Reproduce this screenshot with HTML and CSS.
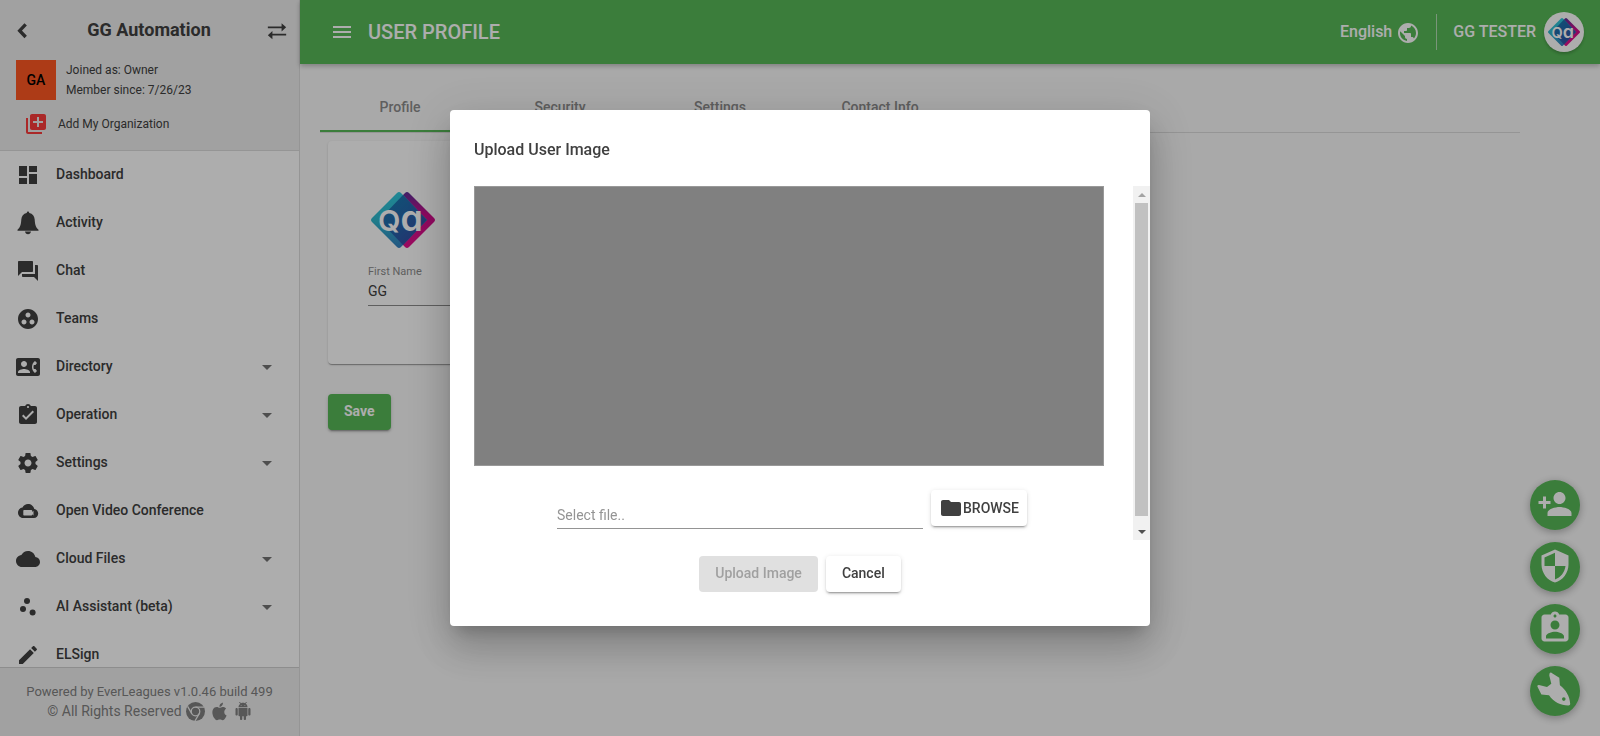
FILE: index.html
```html
<!DOCTYPE html>
<html lang="en">
<head>
<meta charset="utf-8">
<meta name="viewport" content="width=device-width, initial-scale=1">
<title>User Profile</title>
<link rel="stylesheet" href="styles.css">
</head>
<body>
<svg class="sprite" aria-hidden="true">
  <symbol id="back" viewBox="0 0 24 24"><path d="M14.500 2 5.500 11.500 14.500 21" fill="none" stroke="currentColor" stroke-width="5"/></symbol>
  <symbol id="swap" viewBox="0 0 24 24"><path d="M2 7h15V3.500L22 8l-5 4.500V9H2zM22 15H7v-3l-5 4.500L7 21v-4h15z"/></symbol>
  <symbol id="library-add" viewBox="0 0 24 24"><path d="M4 6H2v14c0 1.100.9 2 2 2h14v-2H4V6zm16-4H8c-1.100 0-2 .9-2 2v12c0 1.100.9 2 2 2h12c1.100 0 2-.9 2-2V4c0-1.100-.9-2-2-2zm-1 9h-4v4h-2v-4H9V9h4V5h2v4h4v2z"/></symbol>
  <symbol id="dashboard" viewBox="0 0 24 24"><path d="M3 13h8V3H3v10zm0 8h8v-6H3v6zm10 0h8V11h-8v10zm0-18v6h8V3h-8z"/></symbol>
  <symbol id="bell" viewBox="0 0 24 24"><path d="M12 .5c.8 0 1.200.6 1.300 1.500 3.300.7 5.200 3.300 5.400 6.500.2 4.500.8 7.500 3.800 10.300v1H1.500v-1C4.500 16 5.100 13 5.300 8.500 5.500 5.300 7.400 2.700 10.700 2 10.800 1.100 11.200.5 12 .5zM9 20.500h6c-.2 1.600-1.400 2.700-3 2.700s-2.800-1.100-3-2.700z"/></symbol>
  <symbol id="forum" viewBox="0 0 24 24"><path d="M21 6h-2v9H6v2c0 .55.45 1 1 1h11l4 4V7c0-.55-.45-1-1-1zm-4 6V3c0-.55-.45-1-1-1H3c-.55 0-1 .45-1 1v14l4-4h10c.55 0 1-.45 1-1z"/></symbol>
  <symbol id="group" viewBox="0 0 24 24"><path d="M12 2C6.480 2 2 6.480 2 12s4.480 10 10 10 10-4.480 10-10S17.520 2 12 2zM8 17.500c-1.380 0-2.500-1.120-2.500-2.500s1.120-2.500 2.500-2.500 2.500 1.120 2.500 2.500-1.120 2.500-2.500 2.500zM9.500 8c0-1.380 1.120-2.500 2.500-2.500s2.500 1.120 2.500 2.500-1.120 2.500-2.500 2.500S9.500 9.380 9.500 8zm6.500 9.500c-1.380 0-2.500-1.120-2.500-2.500s1.120-2.500 2.500-2.500 2.500 1.120 2.500 2.500-1.120 2.500-2.500 2.500z"/></symbol>
  <symbol id="contact" viewBox="0 0 24 24"><path d="M22 3H2C.9 3 0 3.900 0 5v14c0 1.100.9 2 2 2h20c1.100 0 1.990-.9 1.990-2L24 5c0-1.100-.9-2-2-2zM8 6c1.660 0 3 1.340 3 3s-1.340 3-3 3-3-1.340-3-3 1.340-3 3-3zm6 12H2v-1c0-2 4-3.100 6-3.100s6 1.100 6 3.100v1zm3.850-4h1.640L21 16l-1.990 1.990c-1.310-.98-2.280-2.380-2.730-3.990-.18-.64-.28-1.310-.28-2s.1-1.360.28-2c.45-1.620 1.420-3.010 2.730-3.990L21 8l-1.510 2h-1.640c-.22.63-.35 1.300-.35 2s.13 1.370.35 2z"/></symbol>
  <symbol id="task" viewBox="0 0 24 24"><path d="M19 3h-4.180C14.400 1.840 13.300 1 12 1c-1.300 0-2.400.84-2.820 2H5c-1.100 0-2 .9-2 2v14c0 1.100.9 2 2 2h14c1.100 0 2-.9 2-2V5c0-1.100-.9-2-2-2zm-7 0c.55 0 1 .45 1 1s-.45 1-1 1-1-.45-1-1 .45-1 1-1zm-2 14l-4-4 1.410-1.410L10 14.170l6.590-6.590L18 9l-8 8z"/></symbol>
  <symbol id="gear" viewBox="0 0 24 24"><path d="M19.430 12.980c.04-.32.07-.64.07-.98s-.03-.66-.07-.98l2.110-1.650c.19-.15.24-.42.12-.64l-2-3.460c-.12-.22-.39-.3-.61-.22l-2.490 1c-.52-.4-1.080-.73-1.690-.98l-.38-2.650C14.460 2.180 14.250 2 14 2h-4c-.25 0-.46.18-.49.42l-.38 2.650c-.61.25-1.170.59-1.690.98l-2.490-1c-.23-.09-.49 0-.61.22l-2 3.460c-.13.22-.07.49.12.64l2.110 1.650c-.04.32-.07.65-.07.98s.03.66.07.98l-2.110 1.650c-.19.15-.24.42-.12.64l2 3.460c.12.22.39.3.61.22l2.490-1c.52.4 1.080.73 1.690.98l.38 2.650c.03.24.24.42.49.42h4c.25 0 .46-.18.49-.42l.38-2.650c.61-.25 1.170-.59 1.690-.98l2.490 1c.23.09.49 0 .61-.22l2-3.460c.12-.22.07-.49-.12-.64l-2.110-1.650zM12 15.500c-1.930 0-3.500-1.570-3.500-3.500s1.570-3.500 3.500-3.500 3.500 1.570 3.500 3.500-1.570 3.500-3.500 3.500z"/></symbol>
  <symbol id="cloud-video" viewBox="0 0 24 24"><path fill-rule="evenodd" d="M18.300 10C17.700 7.100 15.100 5 12 5 9.600 5 7.500 6.400 6.500 8.400 4 8.700 2 11 2 13.500 2 16.600 4.200 19 7 19h11c2.300 0 4.200-2 4.200-4.500 0-2.200-1.700-4.300-3.900-4.500zM8 11h7.500c.4 0 .7.300.7.700v1.300l1.300-1.200v4.600l-1.300-1.200v.6c0 .4-.3.700-.7.700H8c-.4 0-.7-.3-.7-.7v-4.100c0-.4.3-.7.7-.7z"/></symbol>
  <symbol id="cloud" viewBox="0 0 24 24"><path d="M19.350 10.040C18.670 6.590 15.640 4 12 4 9.110 4 6.600 5.640 5.350 8.040 2.340 8.360 0 10.910 0 14c0 3.310 2.690 6 6 6h13c2.760 0 5-2.240 5-5 0-2.640-2.050-4.780-4.650-4.960z"/></symbol>
  <symbol id="scatter" viewBox="0 0 24 24"><circle cx="7" cy="14" r="3"/><circle cx="11" cy="6" r="3"/><circle cx="16.600" cy="17.600" r="3"/></symbol>
  <symbol id="pencil" viewBox="0 0 24 24"><path d="M3 17.250V21h3.750L17.810 9.940l-3.750-3.750L3 17.250zM20.710 7.040c.39-.39.39-1.020 0-1.410l-2.340-2.340c-.39-.39-1.020-.39-1.410 0l-1.830 1.830 3.750 3.750 1.830-1.830z"/></symbol>
  <symbol id="chrome" viewBox="0 0 24 24"><circle cx="12" cy="12" r="12"/><g class="chrome-lines" fill="none" stroke-width="1.600"><circle cx="12" cy="12" r="5.400"/><path d="M12 6.600h11M7.300 14.700 2 5.500M16.700 14.700 11.300 24"/></g></symbol>
  <symbol id="apple" viewBox="0 0 24 24"><path d="M18.710 19.500C17.880 20.740 17 21.950 15.660 21.970 14.320 22 13.890 21.180 12.370 21.180 10.840 21.180 10.370 21.950 9.100 22 7.790 22.050 6.800 20.680 5.960 19.470 4.250 17 2.940 12.450 4.700 9.390 5.570 7.870 7.130 6.910 8.820 6.880 10.100 6.860 11.320 7.750 12.110 7.750 12.890 7.750 14.370 6.680 15.920 6.840 16.570 6.870 18.390 7.100 19.560 8.820 19.470 8.880 17.390 10.100 17.410 12.630 17.440 15.650 20.060 16.660 20.090 16.670 20.060 16.740 19.670 18.110 18.710 19.500M13 3.500C13.730 2.670 14.940 2.040 15.940 2 16.070 3.170 15.600 4.350 14.900 5.190 14.210 6.040 13.070 6.700 11.950 6.610 11.800 5.460 12.360 4.260 13 3.500z"/></symbol>
  <symbol id="android" viewBox="0 0 24 24"><path d="M6 18c0 .55.45 1 1 1h1v3.500c0 .83.67 1.500 1.500 1.500s1.500-.67 1.500-1.500V19h2v3.500c0 .83.67 1.500 1.500 1.500s1.500-.67 1.500-1.500V19h1c.55 0 1-.45 1-1V8H6v10zM3.500 8C2.670 8 2 8.670 2 9.500v7c0 .83.67 1.500 1.500 1.500S5 17.330 5 16.500v-7C5 8.670 4.330 8 3.500 8zm17 0c-.83 0-1.500.67-1.500 1.500v7c0 .83.67 1.500 1.500 1.500s1.500-.67 1.500-1.500v-7c0-.83-.67-1.500-1.500-1.500zm-4.970-5.840l1.300-1.300c.2-.2.2-.51 0-.71-.2-.2-.51-.2-.71 0l-1.480 1.480C13.850 1.230 12.950 1 12 1c-.96 0-1.860.23-2.660.63L7.850.15c-.2-.2-.51-.2-.71 0-.2.2-.2.51 0 .71l1.310 1.310C6.970 3.260 6 5.010 6 7h12c0-1.990-.97-3.750-2.470-4.840zM10 5H9V4h1v1zm5 0h-1V4h1v1z"/></symbol>
  <symbol id="menu" viewBox="0 0 24 24"><path d="M3 18h18v-2H3v2zm0-5h18v-2H3v2zm0-7v2h18V6H3z"/></symbol>
  <symbol id="globe" viewBox="0 0 24 24"><path d="M12 2C6.480 2 2 6.480 2 12s4.480 10 10 10 10-4.480 10-10S17.520 2 12 2zm-1 17.930c-3.950-.49-7-3.850-7-7.930 0-.62.08-1.210.21-1.790L9 15v1c0 1.100.9 2 2 2v1.930zm6.900-2.540c-.26-.81-1-1.390-1.900-1.390h-1v-3c0-.55-.45-1-1-1H8v-2h2c.55 0 1-.45 1-1V7h2c1.100 0 2-.9 2-2v-.41c2.930 1.190 5 4.060 5 7.410 0 2.080-.8 3.970-2.100 5.390z"/></symbol>
  <symbol id="person-add" viewBox="0 0 24 24"><path d="M15 12c2.210 0 4-1.790 4-4s-1.790-4-4-4-4 1.790-4 4 1.790 4 4 4zm-9-2V7H4v3H1v2h3v3h2v-3h3v-2H6zm9 4c-2.670 0-8 1.340-8 4v2h16v-2c0-2.660-5.330-4-8-4z"/></symbol>
  <symbol id="shield" viewBox="0 0 24 24"><path d="M12 1L3 5v6c0 5.550 3.840 10.740 9 12 5.160-1.260 9-6.450 9-12V5l-9-4zm0 10.990h7c-.53 4.120-3.280 7.790-7 8.940V12H5V6.300l7-3.110v8.800z"/></symbol>
  <symbol id="badge" viewBox="0 0 24 24"><path d="M19 3h-4.180C14.400 1.840 13.300 1 12 1c-1.300 0-2.400.84-2.820 2H5c-1.100 0-2 .9-2 2v14c0 1.100.9 2 2 2h14c1.100 0 2-.9 2-2V5c0-1.100-.9-2-2-2zm-7 0c.55 0 1 .45 1 1s-.45 1-1 1-1-.45-1-1 .45-1 1-1zm0 4c1.660 0 3 1.340 3 3s-1.340 3-3 3-3-1.340-3-3 1.340-3 3-3zm6 12H6v-1.400c0-2 4-3.100 6-3.100s6 1.100 6 3.100V19z"/></symbol>
  <symbol id="rocket" viewBox="0 0 36 36"><path fill-rule="evenodd" d="M12.500 1.500c.8-1.200 1.800-1.100 2.600-.3l7.200 4.600.6 7.400c6 4.500 9.800 11 10.300 18.500 0 1.300-.6 1.700-1.800 1.700-7.500.1-14.500-3.300-19.400-10.200l-7.600-.8L.6 15c-.6-1.200.1-2.200 1.400-2l8 2 4.300-3.300-2-8.200zM26.800 25.300a1.800 1.800 0 1 0 0 3.600 1.800 1.800 0 0 0 0-3.600z"/></symbol>
  <symbol id="folder" viewBox="0 0 24 24"><path d="M10 4H4c-1.100 0-1.990.9-1.990 2L2 18c0 1.100.9 2 2 2h16c1.100 0 2-.9 2-2V8c0-1.100-.9-2-2-2h-8l-2-2z"/></symbol>
  <linearGradient id="cyan" x1="0" y1="0" x2="0" y2="1"><stop offset="0" stop-color="#30c8dc"/><stop offset=".5" stop-color="#30b8cc"/><stop offset="1" stop-color="#347fc0"/></linearGradient>
  <linearGradient id="magenta" x1="0" y1="0" x2="0" y2="1"><stop offset="0" stop-color="#5a3098"/><stop offset=".4" stop-color="#d00c8c"/><stop offset="1" stop-color="#e4108c"/></linearGradient>
  <linearGradient id="blue" x1="0" y1="0" x2="1" y2="1"><stop offset="0" stop-color="#147fae"/><stop offset=".5" stop-color="#2465ac"/><stop offset="1" stop-color="#3d3f9e"/></linearGradient>
  <symbol id="diamonds" viewBox="0 0 64 56">
    <path fill="url(#magenta)" d="M34 1q2-2 4 0l25 25q2 2 0 4L38 55q-2 2-4 0L8 28z"/>
    <path fill="url(#cyan)" d="M26 1q2-2 4 0l26 27-26 27q-2 2-4 0L1 30q-2-2 0-4z"/>
    <path fill="url(#blue)" d="M32 3l24 25-24 25L8 28z"/>
  </symbol>
</svg>

<div class="app">
  <aside class="sidebar">
    <div class="org">
      <div class="org-bar">
        <button class="icon-button" aria-label="Back"><svg class="icon-sm"><use href="#back"/></svg></button>
        <h2 class="org-name">GG Automation</h2>
        <button class="icon-button" aria-label="Switch organization"><svg class="icon-md"><use href="#swap"/></svg></button>
      </div>
      <div class="org-info">
        <span class="org-avatar">GA</span>
        <div class="org-facts"><span>Joined as: Owner</span><span>Member since: 7/26/23</span></div>
      </div>
      <button class="org-add"><svg class="icon"><use href="#library-add"/></svg>Add My Organization</button>
    </div>
    <nav class="nav">
      <a class="nav-item" href="#"><svg class="icon"><use href="#dashboard"/></svg><span>Dashboard</span></a>
      <a class="nav-item" href="#"><svg class="icon"><use href="#bell"/></svg><span>Activity</span></a>
      <a class="nav-item" href="#"><svg class="icon"><use href="#forum"/></svg><span>Chat</span></a>
      <a class="nav-item" href="#"><svg class="icon"><use href="#group"/></svg><span>Teams</span></a>
      <a class="nav-item expandable" href="#"><svg class="icon"><use href="#contact"/></svg><span>Directory</span></a>
      <a class="nav-item expandable" href="#"><svg class="icon"><use href="#task"/></svg><span>Operation</span></a>
      <a class="nav-item expandable" href="#"><svg class="icon"><use href="#gear"/></svg><span>Settings</span></a>
      <a class="nav-item" href="#"><svg class="icon"><use href="#cloud-video"/></svg><span>Open Video Conference</span></a>
      <a class="nav-item expandable" href="#"><svg class="icon"><use href="#cloud"/></svg><span>Cloud Files</span></a>
      <a class="nav-item expandable" href="#"><svg class="icon"><use href="#scatter"/></svg><span>AI Assistant (beta)</span></a>
      <a class="nav-item" href="#"><svg class="icon"><use href="#pencil"/></svg><span>ELSign</span></a>
    </nav>
    <footer class="footer">
      <span>Powered by EverLeagues v1.0.46 build 499</span>
      <span class="rights">© All Rights Reserved
        <svg class="icon-chrome"><use href="#chrome"/></svg>
        <svg class="icon-apple"><use href="#apple"/></svg>
        <svg class="icon-android"><use href="#android"/></svg>
      </span>
    </footer>
  </aside>

  <div class="page">
    <header class="topbar">
      <button class="icon-button" aria-label="Menu"><svg class="icon"><use href="#menu"/></svg></button>
      <h1 class="page-title">USER PROFILE</h1>
      <button class="language">English<svg class="icon"><use href="#globe"/></svg></button>
      <button class="account">GG TESTER<span class="avatar"><svg class="avatar-logo" viewBox="0 0 64 56"><use href="#diamonds"/><text class="qa-text" x="7" y="39">Q<tspan class="qa-a">ɑ</tspan></text></svg></span></button>
    </header>
    <main class="content">
      <div class="tabs" role="tablist">
        <button class="tab active" role="tab" aria-selected="true">Profile</button>
        <button class="tab" role="tab">Security</button>
        <button class="tab" role="tab">Settings</button>
        <button class="tab" role="tab">Contact Info</button>
      </div>
      <form class="profile">
        <div class="card">
          <svg class="logo" viewBox="0 0 64 56"><use href="#diamonds"/><text class="qa-text" x="7" y="39">Q<tspan class="qa-a">ɑ</tspan></text></svg>
          <label class="field-label" for="first-name">First Name</label>
          <input class="field" id="first-name" type="text" value="GG">
        </div>
        <button class="button primary" type="button">Save</button>
      </form>
    </main>
  </div>
</div>

<div class="fabs">
  <button class="fab" aria-label="Add person"><svg><use href="#person-add"/></svg></button>
  <button class="fab" aria-label="Security"><svg><use href="#shield"/></svg></button>
  <button class="fab" aria-label="Assignments"><svg><use href="#badge"/></svg></button>
  <button class="fab" aria-label="Launch"><svg><use href="#rocket"/></svg></button>
</div>

<div class="backdrop">
  <section class="dialog" role="dialog" aria-modal="true" aria-labelledby="dialog-title">
    <h2 class="dialog-title" id="dialog-title">Upload User Image</h2>
    <div class="dialog-body">
      <div class="dialog-scroll">
        <div class="preview"></div>
        <div class="file-row">
          <input class="file-name" type="text" placeholder="Select file.." aria-label="Select file">
          <button class="button browse"><svg class="icon"><use href="#folder"/></svg>BROWSE</button>
        </div>
      </div>
      <div class="scrollbar" aria-hidden="true">
        <span class="arrow arrow-up"></span>
        <span class="thumb"></span>
        <span class="arrow arrow-down"></span>
      </div>
    </div>
    <div class="dialog-actions">
      <button class="button" disabled>Upload Image</button>
      <button class="button">Cancel</button>
    </div>
  </section>
</div>
</body>
</html>
```
FILE: styles.css
```css
:root {
  --green: #57b957;
  --text: #404040;
  --line: #dcdcdc;
}

* { box-sizing: border-box; }

body {
  margin: 0;
  background: #fafafa;
  color: var(--text);
  font: 400 14px/20px Roboto, sans-serif;
}

button, input { font: inherit; color: inherit; }
button { padding: 0; border: 0; background: none; }
svg { fill: currentColor; flex: none; }

.sprite { position: absolute; width: 0; height: 0; }
.icon { width: 24px; height: 24px; }
.icon-sm { width: 16px; height: 16px; }
.icon-md { width: 22px; height: 22px; }
.icon-button { display: flex; }

.app { display: flex; height: 100vh; overflow: hidden; }

.sidebar {
  display: flex;
  flex-direction: column;
  flex: none;
  width: 300px;
  border-right: 1px solid var(--line);
  background: #fff;
}

.org {
  flex: none;
  padding: 16px 11px 14px 16px;
  border-bottom: 1px solid var(--line);
  background: #eee;
}
.org-bar { display: flex; align-items: center; height: 28px; margin-bottom: 16px; }
.org-bar .icon-button { padding-top: 2px; }
.org-name { flex: 1; margin: 0; font-size: 18px; line-height: 28px; font-weight: 700; text-align: center; }
.org-info { display: flex; gap: 10px; margin-bottom: 12px; }
.org-avatar {
  display: grid;
  place-items: center;
  width: 40px;
  height: 40px;
  background: #ff5722;
  color: #000;
  font-weight: 500;
}
.org-facts { display: flex; flex-direction: column; font-size: 12px; }
.org-add {
  display: flex;
  align-items: center;
  gap: 10px;
  padding-left: 8px;
  font-size: 12px;
}
.org-add .icon { color: #fb3b3b; }

.nav { flex: 1; min-height: 0; overflow: hidden; }
.nav-item {
  display: flex;
  align-items: center;
  gap: 16px;
  height: 48px;
  padding: 0 27px 0 16px;
  color: inherit;
  font-weight: 500;
  text-decoration: none;
}
.nav-item span { padding-bottom: 2px; }
.expandable::after {
  content: "";
  margin-left: auto;
  border: 5px solid transparent;
  border-top-color: #737373;
  border-bottom: 0;
}

.footer {
  display: flex;
  flex-direction: column;
  align-items: center;
  flex: none;
  height: 69px;
  padding-top: 14px;
  border-top: 1px solid #d0d0d0;
  background: #eee;
  color: #808080;
  font-size: 13px;
}
.rights { display: flex; align-items: center; gap: 4px; height: 18px; font-size: 14px; }
.icon-chrome { width: 19px; height: 19px; }
.icon-apple { width: 21px; height: 21px; }
.icon-android { width: 18px; height: 18px; }
.chrome-lines { stroke: #eee; }

.page { flex: 1; min-width: 0; }
.topbar {
  display: flex;
  align-items: center;
  height: 64px;
  padding: 0 16px 0 30px;
  background: var(--green);
  color: #fff;
  box-shadow: 0 2px 5px rgba(0, 0, 0, .25);
}
.page-title { flex: 1; margin: 0 0 0 14px; font-size: 20px; font-weight: 500; }
.language, .account { display: flex; align-items: center; font-size: 16px; font-weight: 500; }
.language { gap: 4px; padding-right: 16px; }
.language .icon { margin-top: 2px; }
.account { gap: 8px; }
.account::before { content: ""; width: 1px; height: 36px; margin-right: 8px; background: #b4dcb4; }
.avatar {
  display: grid;
  place-items: center;
  width: 40px;
  height: 40px;
  border-radius: 50%;
  background: #fff;
  box-shadow: 0 2px 3px rgba(0, 0, 0, .2);
}
.avatar-logo { width: 32px; height: 28px; }
.qa-text { fill: #fff; font: 600 29px Inter, sans-serif; }
.qa-a { font-size: 36px; }

.content { padding: 20px 80px 20px 20px; }
.tabs { display: flex; border-bottom: 1px solid var(--line); }
.tab { width: 160px; height: 48px; padding-bottom: 2px; color: #8c8c8c; font-weight: 500; }
.tab.active { border-bottom: 2px solid var(--green); padding-bottom: 0; }
.profile { padding: 8px; }
.card {
  display: flex;
  flex-direction: column;
  width: 520px;
  min-height: 223px;
  margin-bottom: 30px;
  padding: 51px 40px 58px;
  border-radius: 4px;
  background: #fff;
  box-shadow: 0 2px 1px -1px rgba(0, 0, 0, .2), 0 1px 1px rgba(0, 0, 0, .14), 0 1px 3px rgba(0, 0, 0, .12);
}
.logo { width: 64px; height: 56px; margin: 0 0 14px 3px; }
.field-label { color: #8c8c8c; font-size: 11px; }
.field { height: 24px; padding: 0 0 6px; border: 0; border-bottom: 1px solid #8c8c8c; background: none; outline: 0; }

.button {
  height: 36px;
  padding: 0 16px 2px;
  border-radius: 4px;
  background: #fff;
  color: var(--text);
  font-weight: 500;
  box-shadow: 0 3px 1px -2px rgba(0, 0, 0, .2), 0 2px 2px rgba(0, 0, 0, .14), 0 1px 5px rgba(0, 0, 0, .12);
}
.button:disabled { background: #e0e0e0; color: #a0a0a0; box-shadow: none; }
.primary { background: var(--green); color: #fff; font-weight: 700; }

.fabs { position: fixed; right: 20px; bottom: 20px; display: flex; flex-direction: column; gap: 12px; }
.fab {
  display: grid;
  place-items: center;
  width: 50px;
  height: 50px;
  padding-bottom: 3px;
  border-radius: 50%;
  background: var(--green);
  color: #fff;
  box-shadow: 0 2px 8px rgba(0, 0, 0, .3);
}
.fab svg { width: 36px; height: 36px; }

.backdrop {
  position: fixed;
  inset: 0;
  display: grid;
  place-items: center;
  background: rgba(0, 0, 0, .32);
}
.dialog {
  width: 700px;
  max-width: 80vw;
  padding: 24px 0;
  border-radius: 4px;
  background: #fff;
  box-shadow: 0 11px 15px -7px rgba(0, 0, 0, .2), 0 24px 38px 3px rgba(0, 0, 0, .14), 0 9px 46px 8px rgba(0, 0, 0, .12);
}
.dialog-title { margin: 0; padding: 0 24px 20px; font-size: 16px; line-height: 32px; font-weight: 500; }
.dialog-body { display: flex; }
.dialog-scroll { flex: 1; height: 354px; padding: 0 29px 0 24px; overflow: hidden; }
.preview { height: 280px; border: 1px solid #999; background: #808080; }
.file-row { display: flex; gap: 8px; padding: 24px 77px 0 83px; }
.file-name {
  flex: 1;
  min-width: 0;
  height: 39px;
  padding: 12px 0 0;
  border: 0;
  border-bottom: 1px solid #949494;
  outline: 0;
}
.file-name::placeholder { color: #949494; opacity: 1; }
.browse { display: flex; align-items: center; padding: 0 8px; }

.scrollbar {
  display: flex;
  flex-direction: column;
  align-items: center;
  width: 17px;
  background: #f1f1f1;
}
.thumb { flex: 1; width: 13px; margin-bottom: 7px; background: #c1c1c1; }
.arrow { display: grid; place-items: center; height: 17px; }
.arrow::before { content: ""; border: 4px solid transparent; }
.arrow-up::before { border-bottom-color: #a3a3a3; border-top: 0; }
.arrow-down::before { border-top-color: #505050; border-bottom: 0; }

.dialog-actions { display: flex; justify-content: center; gap: 8px; padding: 16px 0 10px; }
```
